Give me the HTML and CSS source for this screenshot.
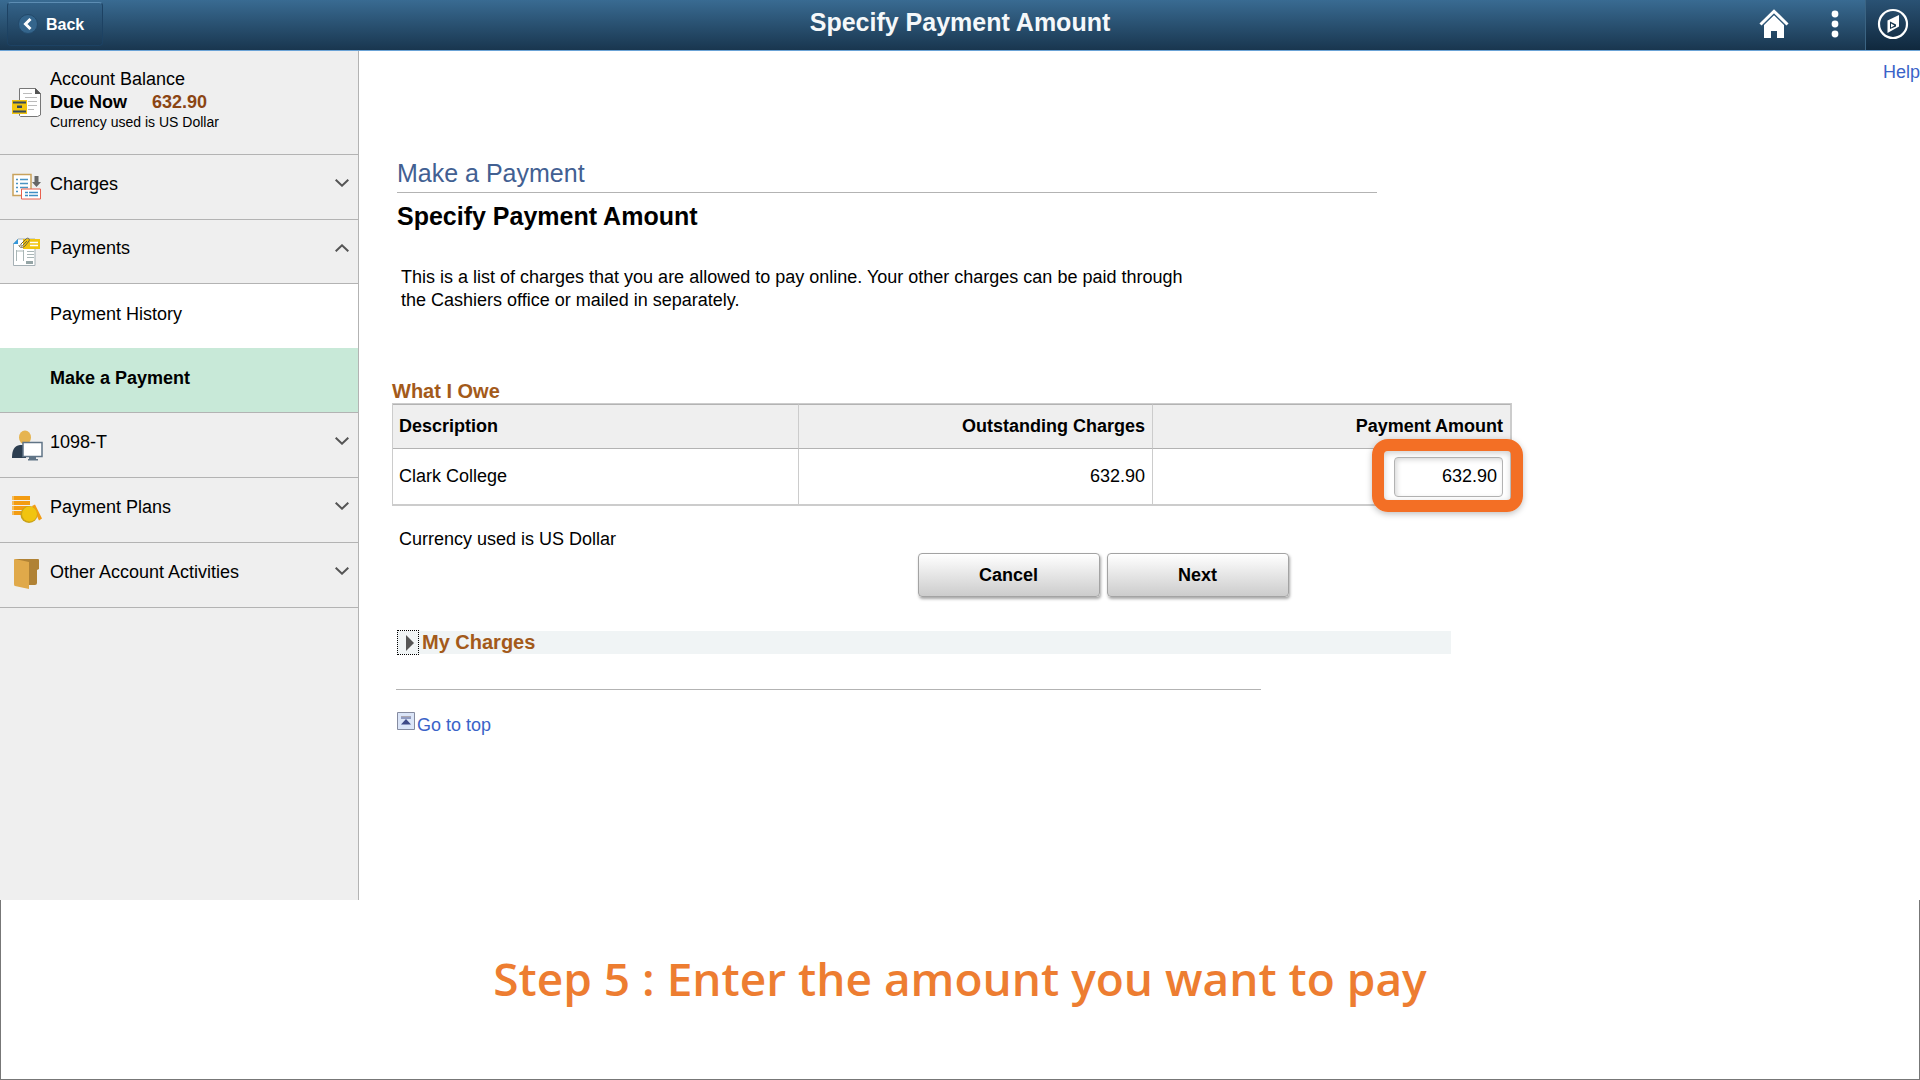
FILE: index.html
```html
<!DOCTYPE html>
<html lang="en">
<head>
  <meta charset="UTF-8">
  <meta name="viewport" content="width=device-width, initial-scale=1.0">
  <title>Specify Payment Amount</title>
  <link rel="stylesheet" href="styles.css">
</head>
<body>
  <header class="topbar">
    <button type="button" class="back">
      <svg width="20" height="20" viewBox="0 0 20 20" aria-hidden="true">
        <circle cx="10" cy="10" r="9.5" fill="#34658c" stroke="#23496a"/>
        <path d="M12.5 5 7.5 10l5 5" fill="none" stroke="#fff" stroke-width="3"/>
      </svg>
      Back
    </button>
    <h1>Specify Payment Amount</h1>
    <div class="tools">
      <button type="button" class="tool" aria-label="Home">
        <svg width="30" height="30" viewBox="0 0 30 30">
          <path d="M15 6 25 15.500V29h-7v-7h-6v7H5V15.500z" fill="#fff"/>
          <path d="M1.500 15.500 15 2.300l13.500 13.200" fill="none" stroke="#fff" stroke-width="3"/>
          <path d="M3.500 17 15 5.500 26.500 17" fill="none" stroke="#2b5577" stroke-width="1"/>
        </svg>
      </button>
      <button type="button" class="tool" aria-label="Actions">
        <svg width="8" height="30" viewBox="0 0 8 30">
          <g fill="#fff"><circle cx="4" cy="5" r="3.400"/><circle cx="4" cy="15" r="3.400"/><circle cx="4" cy="25" r="3.400"/></g>
        </svg>
      </button>
      <button type="button" class="tool tool-nav" aria-label="Navigator">
        <svg width="32" height="32" viewBox="0 0 32 32">
          <circle cx="16" cy="16" r="14" fill="none" stroke="#fff" stroke-width="2.200"/>
          <path d="M10.500 12.500 22 7V18.500L10.500 25z" fill="#fff"/>
          <path d="M13 13.500 19 16.500v2L13 21z" fill="#17364f"/>
          <path d="M14 15.500l3.500 2-3.500 2z" fill="#fff"/>
        </svg>
      </button>
    </div>
  </header>

  <div class="layout">
    <nav class="sidebar">
      <div class="balance">
        <svg class="icon" width="32" height="32" viewBox="0 0 32 32" aria-hidden="true">
          <path d="M7.500 1.500h16l5 5v21.500l-3 1.500h-17l-1-1z" fill="#fff" stroke="#777"/>
          <path d="M23 1v6h6z" fill="#555"/>
          <path d="M11 6.500h9M13 10.500h12M16 14.500h9M16 18.500h9M16 22.500h6" stroke="#bbb"/>
          <path d="M0 13h15v14H0z" fill="#f1c40f"/>
          <path d="M1 15.500h13M1 24.500h13" stroke="#34495e" stroke-width="2"/>
          <path d="M5 18.500h5v2.500H5z" fill="#34495e"/>
        </svg>
        <div class="balance-text">
          <div>Account Balance</div>
          <div class="due"><span>Due Now</span> <span class="amount">632.90</span></div>
          <div class="note">Currency used is US Dollar</div>
        </div>
      </div>

      <button type="button" class="menu-item" aria-expanded="false">
        <svg class="icon" width="32" height="32" viewBox="0 0 32 32" aria-hidden="true">
          <path d="M1 3.500h18v21H1z" fill="#fff" stroke="#c9a25c" stroke-width="1.500"/>
          <path d="M4 8.500h2M8 8.500h8M4 12.500h2M8 12.500h8M4 16.500h2M8 16.500h8M4 20.500h2" stroke="#4a94c4" stroke-width="1.500"/>
          <path d="M22.500 5h4v6H29l-4.500 5-4.500-5h2.500z" fill="#666"/>
          <path d="M9.500 18h19v10h-19z" fill="#fff" stroke="#e8604f"/>
          <path d="M13 21.500h3M17 21.500h9M13 24.500h3M17 24.500h9" stroke="#3f8fc4" stroke-width="1.500"/>
        </svg>
        <span>Charges</span>
        <svg class="chevron" width="14" height="8" viewBox="0 0 14 8"><path d="M.700.700 7 6.700 13.300.700"/></svg>
      </button>

      <button type="button" class="menu-item open" aria-expanded="true">
        <svg class="icon" width="32" height="32" viewBox="0 0 32 32" aria-hidden="true">
          <path d="M6 3h17v26.500H1.500V8z" fill="#fff" stroke="#a5b0b5"/>
          <path d="M1 8l5-5v5z" fill="#3498db"/>
          <path d="M11 3h17v10H11z" fill="#f1c40f"/>
          <path d="M18 6.500h8M18 9.500h8" stroke="#fff" stroke-width="1.500"/>
          <path d="M4.500 14v11M11.500 14v11M4 15h8M15 15.500h7M15 18.500h7M15 21.500h7" stroke="#a9b6b6"/>
          <path d="M14 25h7v3h-7z" fill="#95a5a6"/>
          <path d="M7 9c0 3 4 3 6 1l4-5c1-2-1-4-3-2l-5 5c-1 2 1 3 2 1l4-4" fill="none" stroke="#6b6242"/>
        </svg>
        <span>Payments</span>
        <svg class="chevron" width="14" height="8" viewBox="0 0 14 8"><path d="M.700 7.300 7 1.300l6.300 6"/></svg>
      </button>
      <a href="#" class="sub-item">Payment History</a>
      <a href="#" class="sub-item selected" aria-current="page">Make a Payment</a>

      <button type="button" class="menu-item" aria-expanded="false">
        <svg class="icon" width="32" height="32" viewBox="0 0 32 32" aria-hidden="true">
          <path d="M0 29c0-8 2-12 8-13h6v13z" fill="#2c3e50"/>
          <ellipse cx="13" cy="8.500" rx="6" ry="7" fill="#e6b450"/>
          <path d="M11 13.500h19v14H11z" fill="#fff" stroke="#607486" stroke-width="1.500"/>
          <path d="M17 28h7v2h2v1.500H16V30h1z" fill="#607486"/>
        </svg>
        <span>1098-T</span>
        <svg class="chevron" width="14" height="8" viewBox="0 0 14 8"><path d="M.700.700 7 6.700 13.300.700"/></svg>
      </button>

      <button type="button" class="menu-item" aria-expanded="false">
        <svg class="icon" width="32" height="32" viewBox="0 0 32 32" aria-hidden="true">
          <path d="M0 2h18v4H0zM0 7h18v4H0zM0 12h18v4H0zM0 17h14v4H0z" fill="#f39c12"/>
          <path d="M0 2h2v4H0zM0 7h2v4H0zM0 12h2v4H0zM0 17h2v4H0z" fill="#f5bd5c"/>
          <path d="M20 12l3-1.500 7 14-3 2z" fill="#f39c12"/>
          <circle cx="17" cy="20.500" r="8.500" fill="#c9a21a"/>
          <circle cx="17.500" cy="20" r="7.500" fill="#f1c40f"/>
        </svg>
        <span>Payment Plans</span>
        <svg class="chevron" width="14" height="8" viewBox="0 0 14 8"><path d="M.700.700 7 6.700 13.300.700"/></svg>
      </button>

      <button type="button" class="menu-item" aria-expanded="false">
        <svg class="icon" width="32" height="32" viewBox="0 0 32 32" aria-hidden="true">
          <path d="M3 0h23q1 0 1 1v9l-2 1v13q0 2-2 2H10z" fill="#b08235"/>
          <path d="M2 1q0-1 1-1l14 3v27L3 27q-1 0-1-2z" fill="#e0a94a"/>
        </svg>
        <span>Other Account Activities</span>
        <svg class="chevron" width="14" height="8" viewBox="0 0 14 8"><path d="M.700.700 7 6.700 13.300.700"/></svg>
      </button>
    </nav>

    <main class="content">
      <div class="help"><a href="#">Help</a></div>
      <p class="page-title">Make a Payment</p>
      <h2>Specify Payment Amount</h2>
      <p class="intro">This is a list of charges that you are allowed to pay online. Your other charges can be paid through the Cashiers office or mailed in separately.</p>

      <h3 id="owe">What I Owe</h3>
      <table class="owe" aria-labelledby="owe">
        <colgroup><col class="col-desc"><col class="col-charges"><col></colgroup>
        <thead>
          <tr>
            <th>Description</th>
            <th class="num">Outstanding Charges</th>
            <th class="num" id="pay-amount">Payment Amount</th>
          </tr>
        </thead>
        <tbody>
          <tr>
            <td>Clark College</td>
            <td class="num">632.90</td>
            <td class="num">
              <div class="field"><input type="text" value="632.90" aria-labelledby="pay-amount"></div>
            </td>
          </tr>
        </tbody>
      </table>
      <p class="currency">Currency used is US Dollar</p>

      <div class="actions">
        <button type="button" class="button">Cancel</button>
        <button type="button" class="button">Next</button>
      </div>

      <div class="my-charges">
        <button type="button" class="expand" aria-label="Expand section My Charges">
          <svg width="8" height="16" viewBox="0 0 8 16"><path d="M0 0l8 8-8 8z" fill="#555"/></svg>
        </button>
        <h3>My Charges</h3>
      </div>

      <hr>
      <a href="#" class="to-top">
        <svg width="18" height="18" viewBox="0 0 18 18" aria-hidden="true">
          <path d="M.500.500h17v17H.500z" fill="#dbe5f8" stroke="#858ba0"/>
          <path d="M4 4.500h10" stroke="#aaa6b0"/><path d="M4 6h10" stroke="#44508a"/>
          <path d="M9 7l5 5.500H4z" fill="#3e4a88"/>
        </svg>
        <span>Go to top</span>
      </a>
    </main>
  </div>

  <footer class="caption">Step 5 : Enter the amount you want to pay</footer>
</body>
</html>
```

FILE: styles.css
```css
* {
  box-sizing: border-box;
}
body {
  margin: 0;
  min-height: 100vh;
  display: flex;
  flex-direction: column;
  font-family: "Liberation Sans", Arial, sans-serif;
  font-size: 18px;
  line-height: 23px;
  color: #000;
  background: #fff;
}
h1, h2, h3, p {
  margin: 0;
}
button, input {
  font: inherit;
  color: inherit;
}
svg {
  display: block;
  flex: none;
}
a {
  color: #3a63c8;
  text-decoration: none;
}

/* top bar */
.topbar {
  display: grid;
  grid-template-columns: 1fr auto 1fr;
  height: 51px;
  background: linear-gradient(#396b92, #19364f);
  border-bottom: 1px solid #6ba3d6;
  color: #fff;
}
.topbar h1 {
  color: #f5f8fa;
  font-size: 25px;
  line-height: 45px;
}
.back {
  justify-self: start;
  display: flex;
  align-items: center;
  gap: 8px;
  height: 44px;
  margin: 2px 0 0 7px;
  padding: 0 18px 0 10px;
  border: 1px solid #1d4263;
  border-top-color: #5d8db3;
  border-radius: 4px;
  background: linear-gradient(#336288, #1b3a55);
  font-size: 16px;
  font-weight: bold;
}
.tools {
  justify-self: end;
  display: flex;
}
.tool {
  display: flex;
  align-items: center;
  justify-content: center;
  width: 61px;
  padding: 0 0 2px;
  border: 0;
  background: none;
}
.tool-nav {
  width: 55px;
  border-left: 1px solid #3b6483;
  background: linear-gradient(#2a5274, #10283d);
}

/* left menu */
.layout {
  flex: 1;
  display: flex;
}
.sidebar {
  flex: none;
  width: 359px;
  border-right: 1px solid #b3b3b3;
  background: #efefef;
}
.icon {
  width: 32px;
}
.balance {
  display: flex;
  align-items: center;
  gap: 6px;
  height: 104px;
  padding: 0 12px;
  border-bottom: 1px solid #b3b3b3;
}
.balance-text {
  padding-bottom: 7px;
}
.due {
  display: flex;
  gap: 25px;
  font-weight: bold;
}
.amount {
  color: #8b4513;
}
.note {
  font-size: 14px;
  line-height: 16px;
}
.menu-item {
  display: flex;
  align-items: center;
  gap: 6px;
  width: 100%;
  height: 65px;
  padding: 0 9px 0 12px;
  border: 0;
  border-bottom: 1px solid #b3b3b3;
  background: none;
  text-align: left;
}
.menu-item.open {
  height: 64px;
}
.menu-item span {
  flex: 1;
  padding-bottom: 6px;
}
.chevron {
  margin-bottom: 8px;
  fill: none;
  stroke: #555;
  stroke-width: 2;
}
.sub-item {
  display: block;
  height: 64px;
  padding: 19px 50px;
  background: #fff;
  color: #000;
}
.selected {
  height: 65px;
  border-bottom: 1px solid #b3b3b3;
  background: #c8e9d8;
  font-weight: bold;
}

/* page */
.content {
  flex: 1;
  padding-left: 33px;
}
.help {
  padding-top: 10px;
  text-align: right;
}
.page-title {
  max-width: 980px;
  margin: 74px 0 0 5px;
  padding-bottom: 4px;
  border-bottom: 1px solid #b3b3b3;
  color: #426092;
  font-size: 25px;
  line-height: 30px;
}
h2 {
  margin: 8px 0 0 5px;
  font-size: 25px;
  line-height: 30px;
}
.intro {
  max-width: 800px;
  margin: 35px 0 0 9px;
}
h3 {
  color: #a35a1a;
  font-size: 20px;
  line-height: 23px;
}
#owe {
  margin-top: 68px;
}
.owe {
  width: 100%;
  max-width: 1120px;
  table-layout: fixed;
  border-collapse: separate;
  border-spacing: 0;
  border: solid #ccc;
  border-width: 1px 1px 1px 1px;
}
.col-desc {
  width: 406px;
}
.col-charges {
  width: 354px;
}
.owe th, .owe td {
  padding: 0 7px 0 6px;
  border: solid #ccc;
  border-width: 0 1px 1px 0;
  text-align: left;
}
.owe th {
  height: 45px;
  border-top: 1px solid #b3b3b3;
  border-bottom-color: #b3b3b3;
  background: #efefef;
}
.owe td {
  height: 56px;
}
.owe .num {
  text-align: right;
}
.field {
  position: relative;
  display: inline-block;
}
.field::after {
  content: "";
  position: absolute;
  inset: -18px -20px -15px -22px;
  border: 12px solid #f36f25;
  border-radius: 16px;
  box-shadow: 0 2px 6px rgba(0, 0, 0, 0.25), inset 0 2px 6px rgba(0, 0, 0, 0.2);
  pointer-events: none;
}
.field input {
  display: block;
  width: 109px;
  height: 40px;
  padding: 0 5px;
  border: 1px solid #b3b3b3;
  border-radius: 4px;
  box-shadow: inset 2px 2px 5px rgba(0, 0, 0, 0.15);
  text-align: right;
}
.currency {
  margin: 22px 0 0 7px;
}
.actions {
  display: flex;
  justify-content: center;
  gap: 7px;
  max-width: 1422px;
  margin-top: 2px;
}
.button {
  width: 182px;
  height: 44px;
  border: 1px solid #a3a3a3;
  border-radius: 4px;
  background: linear-gradient(#fff, #ccc);
  box-shadow: 1px 2px 3px rgba(0, 0, 0, 0.35);
  font-weight: bold;
}
.my-charges {
  display: flex;
  align-items: center;
  height: 23px;
  max-width: 1054px;
  margin: 34px 0 0 5px;
  background: #f0f4f5;
}
.expand {
  display: flex;
  align-items: center;
  justify-content: flex-end;
  width: 22px;
  height: 25px;
  margin-right: 3px;
  padding: 0 4px 0 0;
  border: 1px dotted #000;
  background: none;
}
hr {
  max-width: 865px;
  margin: 35px 0 22px 4px;
  border: 0;
  border-top: 1px solid #b3b3b3;
}
.to-top {
  display: inline-flex;
  gap: 2px;
  margin-left: 5px;
}
.to-top span {
  padding-top: 2px;
}

/* instruction strip */
.caption {
  height: 180px;
  border: 1px solid #777;
  border-top: 0;
  color: #ed7d31;
  font-family: "Open Sans", "Segoe UI", sans-serif;
  font-size: 46px;
  font-weight: 600;
  line-height: 156px;
  text-align: center;
}
```
